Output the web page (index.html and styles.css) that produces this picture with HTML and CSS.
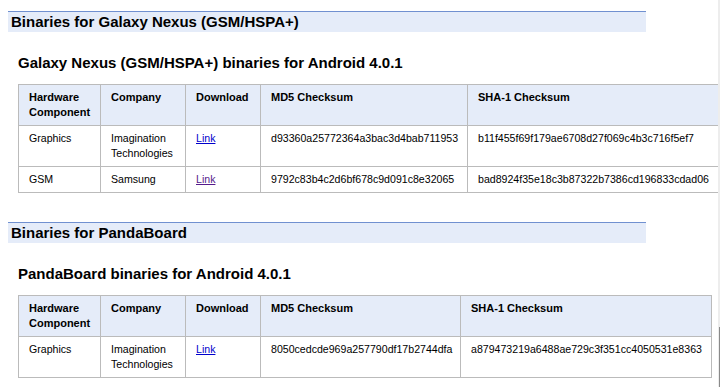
FILE: index.html
```html
<!DOCTYPE html>
<html lang="en">
<head>
    <meta charset="UTF-8">
    <title>Binaries</title>
    <link rel="stylesheet" href="styles.css">
</head>
<body>
    <div class="page">
        <h2 class="bar">Binaries for Galaxy Nexus (GSM/HSPA+)</h2>
        <h3 class="sub">Galaxy Nexus (GSM/HSPA+) binaries for Android 4.0.1</h3>
        <table class="bin-table">
            <colgroup>
                <col class="c-hw">
                <col class="c-co">
                <col class="c-dl">
                <col class="c-md5">
                <col class="c-sha">
            </colgroup>
            <tr>
                <th>Hardware Component</th>
                <th>Company</th>
                <th>Download</th>
                <th>MD5 Checksum</th>
                <th>SHA-1 Checksum</th>
            </tr>
            <tr>
                <td>Graphics</td>
                <td>Imagination Technologies</td>
                <td><a href="#" class="link">Link</a></td>
                <td>d93360a25772364a3bac3d4bab711953</td>
                <td>b11f455f69f179ae6708d27f069c4b3c716f5ef7</td>
            </tr>
            <tr>
                <td>GSM</td>
                <td>Samsung</td>
                <td><a href="#" class="link visited">Link</a></td>
                <td>9792c83b4c2d6bf678c9d091c8e32065</td>
                <td>bad8924f35e18c3b87322b7386cd196833cdad06</td>
            </tr>
        </table>

        <h2 class="bar">Binaries for PandaBoard</h2>
        <h3 class="sub">PandaBoard binaries for Android 4.0.1</h3>
        <table class="bin-table">
            <colgroup>
                <col class="c-hw">
                <col class="c-co">
                <col class="c-dl">
                <col class="c-md5 narrow">
                <col class="c-sha">
            </colgroup>
            <tr>
                <th>Hardware Component</th>
                <th>Company</th>
                <th>Download</th>
                <th>MD5 Checksum</th>
                <th>SHA-1 Checksum</th>
            </tr>
            <tr>
                <td>Graphics</td>
                <td>Imagination Technologies</td>
                <td><a href="#" class="link">Link</a></td>
                <td>8050cedcde969a257790df17b2744dfa</td>
                <td>a879473219a6488ae729c3f351cc4050531e8363</td>
            </tr>
        </table>
    </div>

    <div class="scroll-edge"><div class="scroll-thumb"></div></div>
</body>
</html>
```

FILE: styles.css
```css
* {
    margin: 0;
    padding: 0;
    box-sizing: border-box;
}

body {
    background: #fff;
    color: #000;
    font-family: "Liberation Sans", Arial, sans-serif;
    overflow: hidden;
    height: 100vh;
}

.page {
    padding: 11px 0 0 8px;
}

.bar {
    width: 638px;
    border-top: 1px solid #7090d0;
    background: #e5ecf9;
    font-size: 15px;
    font-weight: bold;
    line-height: 19px;
    padding: 0 3px 1px;
}

.sub {
    font-size: 15px;
    font-weight: bold;
    line-height: 18px;
    margin: 22px 0 12px 10px;
}

.bin-table {
    margin: 0 0 29px 10px;
    border-collapse: collapse;
    table-layout: fixed;
    font-size: 10.6px;
    line-height: 15px;
}

.c-hw { width: 82px; }
.c-co { width: 85px; }
.c-dl { width: 75px; }
.c-md5 { width: 207px; }
.c-md5.narrow { width: 200px; }
.c-sha { width: 251px; }

.bin-table th,
.bin-table td {
    border: 1px solid #bbb;
    padding: 5px 6px 5px 10px;
    text-align: left;
    vertical-align: top;
}

.bin-table th {
    background: #e5ecf9;
    font-size: 11px;
    font-weight: bold;
}

.link {
    color: #0000cc;
}

.link.visited {
    color: #551a8b;
}

.scroll-edge {
    position: fixed;
    top: 0;
    right: 0;
    width: 2px;
    height: 100%;
    background: #ededed;
}

.scroll-thumb {
    position: absolute;
    top: 327px;
    right: 0;
    width: 1px;
    bottom: 0;
    background: #8a8a8a;
}
```
